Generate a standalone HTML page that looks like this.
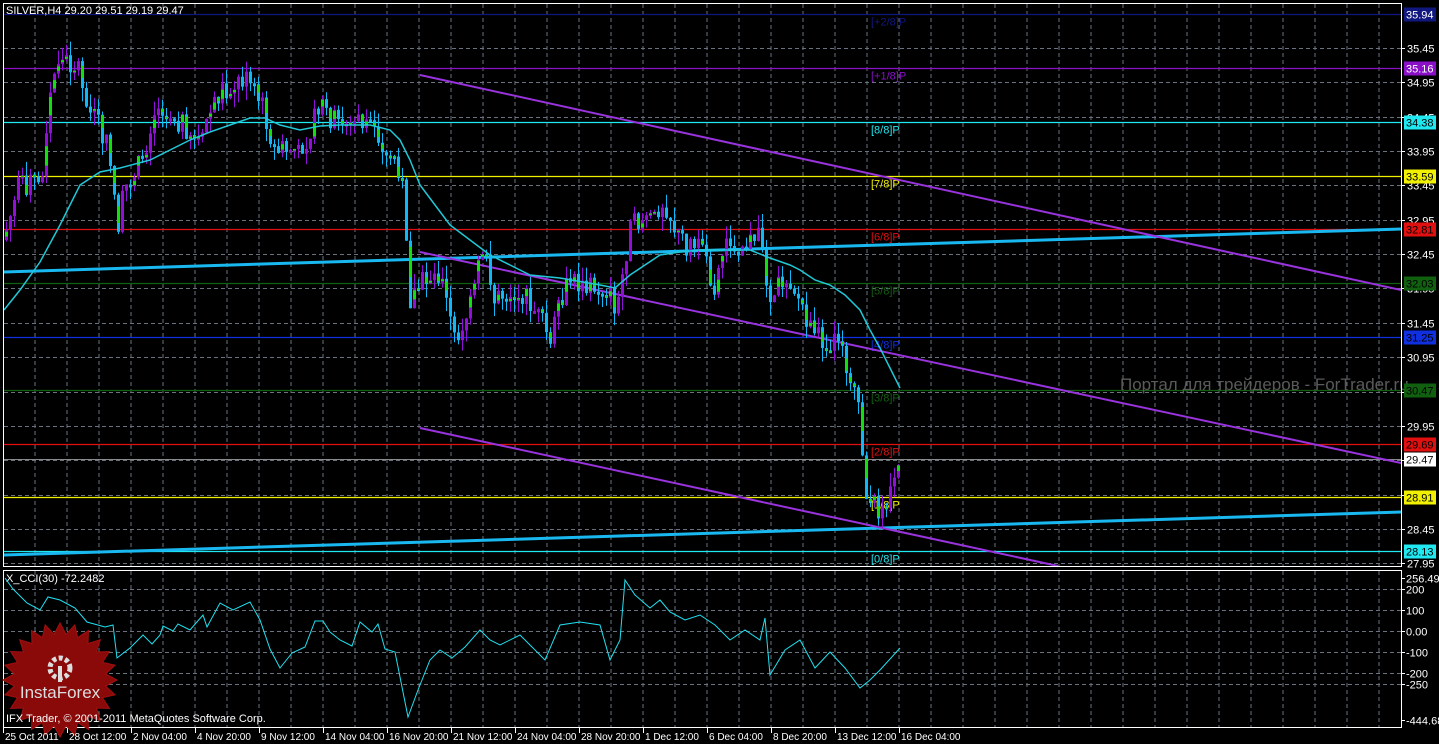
<!DOCTYPE html>
<html><head><meta charset="utf-8"><style>
html,body{margin:0;padding:0;background:#000;width:1439px;height:744px;overflow:hidden}
svg{display:block;font-family:"Liberation Sans",sans-serif}
</style></head><body>
<svg id="s" width="1439" height="744" viewBox="0 0 1439 744" xmlns="http://www.w3.org/2000/svg">
<rect width="1439" height="744" fill="#000"/>
<g id="grid" stroke="#6a7280" stroke-dasharray="4,3" stroke-width="1"></g>
<g id="levels"></g>
<text x="1120" y="390" fill="#5a5a5a" font-size="17">Портал для трейдеров - ForTrader.ru</text>
<line x1="4" y1="272" x2="1401" y2="229" stroke="#1ab8f0" stroke-width="3"/>
<line x1="4" y1="555" x2="1401" y2="512" stroke="#1ab8f0" stroke-width="3"/>
<line x1="420" y1="75" x2="1401" y2="290" stroke="#9933dd" stroke-width="2"/>
<line x1="420" y1="252" x2="1401" y2="463" stroke="#9933dd" stroke-width="2"/>
<line x1="420" y1="428" x2="1058" y2="566" stroke="#9933dd" stroke-width="2"/>
<g id="candles"></g>
<polyline fill="none" stroke="#20c8d8" stroke-width="1.5" points="4,310 20,290 40,262 60,225 80,185 100,172 120,168 150,160 170,150 190,140 210,132 230,125 250,118 265,118 280,125 300,130 320,126 340,125 370,125 390,130 400,140 410,160 420,185 435,205 450,225 470,240 490,255 510,265 530,275 560,278 600,285 615,288 630,275 645,265 660,255 680,252 700,250 720,250 750,250 770,258 790,265 800,270 815,280 830,285 845,295 860,310 870,330 880,348 890,368 900,388"/>
<g id="labels" font-size="11"></g>
<rect x="3.5" y="3.5" width="1398" height="563" fill="none" stroke="#fff"/>
<rect x="3.5" y="570.5" width="1398" height="157" fill="none" stroke="#fff"/>
<text x="6" y="14" fill="#fff" font-size="11">SILVER,H4  29.20 29.51 29.19 29.47</text>
<text x="6" y="582" fill="#fff" font-size="11">X_CCI(30) -72.2482</text>
<g transform="translate(60,680)">
<polygon id="star" fill="#8a0a0a" stroke="#a01010"/>
<circle cx="0" cy="-12" r="10" fill="none" stroke="#ddd" stroke-width="5" stroke-dasharray="4,2.5"/>
<rect x="-2" y="-14" width="4" height="16" fill="#ddd"/>
<text x="0" y="18" fill="#ddd" font-size="17" text-anchor="middle">InstaForex</text>
</g>
<text x="6" y="722" fill="#fff" font-size="11">IFX Trader, © 2001-2011 MetaQuotes Software Corp.</text>
<polyline id="cci" fill="none" stroke="#20e0f0" stroke-width="1"/>
<g id="time" fill="#fff" font-size="10"></g>
</svg>
<script>
(function(){
var NS="http://www.w3.org/2000/svg";
function el(t,a,p,txt){var e=document.createElementNS(NS,t);for(var k in a)e.setAttribute(k,a[k]);if(txt!==undefined)e.textContent=txt;p.appendChild(e);return e;}
var g=document.getElementById('grid');
for(var x=35;x<1400;x+=32){el('line',{x1:x,y1:4,x2:x,y2:566},g);el('line',{x1:x,y1:571,x2:x,y2:727},g);}
function Y(p){return 48+(35.45-p)*68.7;}
var lab=document.getElementById('labels');
for(var p=35.45;p>27.9;p-=0.5){var y=Math.round(Y(p))+.5;el('line',{x1:4,y1:y,x2:1401,y2:y},g);el('line',{x1:1401,y1:y,x2:1405,y2:y,stroke:'#fff'},lab);el('text',{x:1407,y:y+4,fill:'#fff'},lab,p.toFixed(2));}
var cciY=[[578,'256.499'],[589,'200'],[610,'100'],[631,'0.00'],[652,'-100'],[673,'-200'],[684,'-250'],[720,'-444.685']];
cciY.forEach(function(c){var y=c[0]+.5;if(c[1]!='256.499'&&c[1]!='-444.685')el('line',{x1:4,y1:y,x2:1401,y2:y},g);el('line',{x1:1401,y1:y,x2:1405,y2:y,stroke:'#fff'},lab);el('text',{x:1406,y:y+4,fill:'#fff'},lab,c[1]);});
var lv=document.getElementById('levels');
var L=[[35.94,'#101880','[+2/8]P','#fff'],[35.16,'#8a10c8','[+1/8]P','#fff'],[34.38,'#20e8f0','[8/8]P','#000'],[33.59,'#f0f000','[7/8]P','#000'],[32.81,'#e01010','[6/8]P','#000'],[32.03,'#106010','[5/8]P','#000'],[31.25,'#1030e0','[4/8]P','#000'],[30.47,'#106010','[3/8]P','#000'],[29.69,'#e01010','[2/8]P','#000'],[28.91,'#f0f000','[1/8]P','#000'],[28.13,'#20e8f0','[0/8]P','#000']];
L.forEach(function(l){var y=Math.round(Y(l[0]))+.5;el('line',{x1:4,y1:y,x2:1401,y2:y,stroke:l[1],'stroke-width':1.3},lv);
el('text',{x:871,y:y+11,fill:l[1],'font-size':11},lv,l[2]);
el('rect',{x:1404,y:y-7,width:32,height:14,fill:l[1]},lab);el('text',{x:1406,y:y+4,fill:l[3]},lab,l[0].toFixed(2));});
var cy=459.5;el('line',{x1:4,y1:cy,x2:1401,y2:cy,stroke:'#8a8a8a'},lv);el('rect',{x:1404,y:cy-7,width:32,height:14,fill:'#fff'},lab);el('text',{x:1406,y:cy+4,fill:'#000'},lab,'29.47');
var P=[[4,240],[20,185],[44,180],[50,100],[58,60],[80,65],[88,110],[100,125],[112,160],[118,230],[125,190],[140,165],[160,100],[180,120],[200,140],[220,92],[245,78],[265,110],[275,150],[300,150],[320,110],[345,125],[370,120],[385,145],[402,170],[410,300],[425,280],[440,270],[455,340],[470,310],[485,240],[495,300],[510,290],[530,300],[550,340],[570,280],[590,290],[610,290],[618,310],[630,230],[665,200],[680,240],[700,250],[715,285],[725,245],[760,240],[770,290],[790,275],[800,300],[815,340],[835,340],[845,360],[856,390],[862,440],[868,500],[880,510],[890,490],[900,462]];
function interp(A,x){for(var i=1;i<A.length;i++)if(x<=A[i][0]){var a=A[i-1],b=A[i],t=(x-a[0])/(b[0]-a[0]);return a[1]+t*(b[1]-a[1]);}return A[A.length-1][1];}
var seed=7;function rnd(){seed=(seed*9301+49297)%233280;return seed/233280;}
var cg=document.getElementById('candles');var prev=interp(P,4);
for(var x=5;x<=899;x+=4){var c=interp(P,x+2)+(rnd()-.5)*26;var o=prev;var hi=Math.min(o,c)-rnd()*14,lo=Math.max(o,c)+rnd()*14;
var up=c<o;var col=up?'#9010d8':'#10b8f8';el('line',{x1:x+1.5,y1:hi,x2:x+1.5,y2:lo,stroke:col},cg);
var by=Math.min(o,c),h=Math.max(3,Math.abs(o-c));el('rect',{x:x,y:by,width:3,height:h,fill:col},cg);
if(rnd()<.45)el('rect',{x:x,y:by+h*rnd()*.5,width:3,height:h*.45,fill:'#10e010'},cg);prev=c;}
var C=[[5,578],[13,589],[27,603],[40,610],[48,597],[60,600],[75,608],[87,622],[105,627],[113,625],[117,658],[130,648],[143,635],[152,644],[160,635],[163,626],[173,631],[178,624],[190,630],[203,615],[207,627],[220,603],[233,610],[250,602],[260,620],[270,649],[280,668],[292,653],[305,647],[315,621],[323,621],[330,632],[340,640],[352,646],[360,622],[372,632],[378,624],[385,649],[395,652],[408,717],[418,690],[430,660],[440,650],[452,658],[465,647],[480,630],[490,640],[500,645],[520,635],[545,660],[560,625],[580,622],[600,625],[610,660],[620,640],[625,580],[635,595],[650,608],[660,600],[670,612],[685,620],[700,615],[715,625],[730,640],[745,630],[760,640],[765,618],[770,675],[785,650],[800,640],[815,668],[830,652],[845,668],[860,688],[870,680],[880,670],[900,648]];
document.getElementById('cci').setAttribute('points',C.map(function(p){return p.join(',')}).join(' '));
var T=['25 Oct 2011','28 Oct 12:00','2 Nov 04:00','4 Nov 20:00','9 Nov 12:00','14 Nov 04:00','16 Nov 20:00','21 Nov 12:00','24 Nov 04:00','28 Nov 20:00','1 Dec 12:00','6 Dec 04:00','8 Dec 20:00','13 Dec 12:00','16 Dec 04:00'];
var tg=document.getElementById('time');T.forEach(function(t,i){var x=3+64*i;el('line',{x1:x+.5,y1:728,x2:x+.5,y2:733,stroke:'#fff'},tg);el('text',{x:x+2,y:740},tg,t);});
var pts=[];for(var i=0;i<48;i++){var r=i%2?46:57,a=i*Math.PI/24;pts.push((r*Math.cos(a)).toFixed(1)+','+(r*Math.sin(a)).toFixed(1));}
document.getElementById('star').setAttribute('points',pts.join(' '));
})();
</script>
</body></html>
